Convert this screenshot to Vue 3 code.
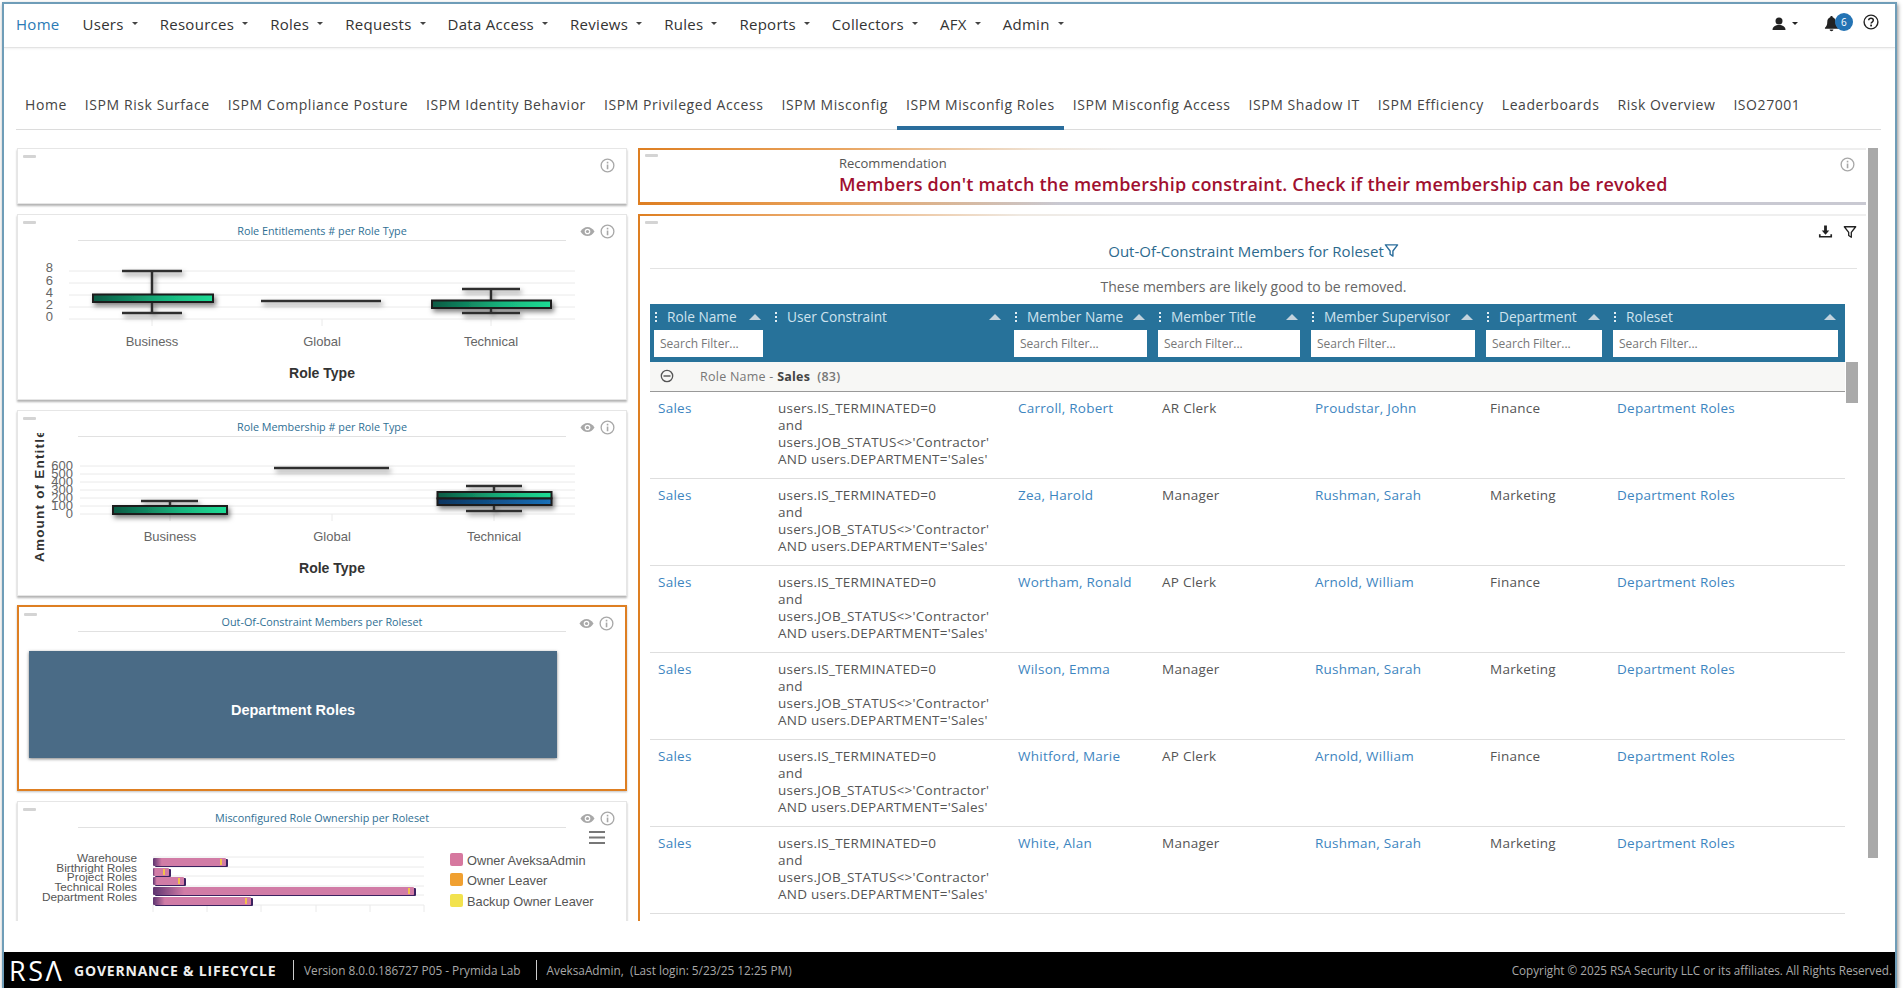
<script setup>
const navItems = ["Users", "Resources", "Roles", "Requests", "Data Access", "Reviews", "Rules", "Reports", "Collectors", "AFX", "Admin"];

const tabs = [
  "Home", "ISPM Risk Surface", "ISPM Compliance Posture", "ISPM Identity Behavior", "ISPM Privileged Access",
  "ISPM Misconfig", "ISPM Misconfig Roles", "ISPM Misconfig Access", "ISPM Shadow IT", "ISPM Efficiency",
  "Leaderboards", "Risk Overview", "ISO27001",
];

const columns = [
  { name: "Role Name", filter: true },
  { name: "User Constraint", filter: false },
  { name: "Member Name", filter: true },
  { name: "Member Title", filter: true },
  { name: "Member Supervisor", filter: true },
  { name: "Department", filter: true },
  { name: "Roleset", filter: true },
];

const members = [
  { name: "Carroll, Robert", title: "AR Clerk", supervisor: "Proudstar, John", dept: "Finance" },
  { name: "Zea, Harold", title: "Manager", supervisor: "Rushman, Sarah", dept: "Marketing" },
  { name: "Wortham, Ronald", title: "AP Clerk", supervisor: "Arnold, William", dept: "Finance" },
  { name: "Wilson, Emma", title: "Manager", supervisor: "Rushman, Sarah", dept: "Marketing" },
  { name: "Whitford, Marie", title: "AP Clerk", supervisor: "Arnold, William", dept: "Finance" },
  { name: "White, Alan", title: "Manager", supervisor: "Rushman, Sarah", dept: "Marketing" },
];

const ownership = [
  { label: "Warehouse", y: 858, end: 226 },
  { label: "Birthright Roles", y: 868, end: 169 },
  { label: "Project Roles", y: 877, end: 184 },
  { label: "Technical Roles", y: 887, end: 414 },
  { label: "Department Roles", y: 897, end: 251 },
];

const legend = [
  { label: "Owner AveksaAdmin", color: "#d6789f", y: 853 },
  { label: "Owner Leaver", color: "#f0a030", y: 873 },
  { label: "Backup Owner Leaver", color: "#f2e24e", y: 894 },
];
</script>

<template>
  <div class="shell">
    <svg class="sprite" width="0" height="0">
      <symbol id="i-info" viewBox="0 0 16 16">
        <circle cx="8" cy="8" r="6.8" fill="none" stroke="currentColor" stroke-width="1.4" />
        <rect x="7.2" y="7" width="1.7" height="5" fill="currentColor" />
        <rect x="7.2" y="4" width="1.7" height="1.8" fill="currentColor" />
      </symbol>
      <symbol id="i-eye" viewBox="0 0 16 16">
        <path d="M0.500 8c2-3.200 4.600-4.800 7.500-4.800s5.500 1.600 7.500 4.800c-2 3.200-4.600 4.800-7.500 4.800S2.500 11.200 0.500 8z" fill="currentColor" />
        <circle cx="8" cy="8" r="3" fill="#fff" />
        <circle cx="8" cy="8" r="1.700" fill="currentColor" />
      </symbol>
      <symbol id="i-filter" viewBox="0 0 16 16">
        <path d="M1.500 2h13L9.500 8.500V14L6.500 12V8.500z" fill="none" stroke="currentColor" stroke-width="1.500" stroke-linejoin="round" />
      </symbol>
    </svg>

    <nav class="topnav">
      <a class="topnav__home">Home</a>
      <a v-for="item in navItems" :key="item" class="topnav__item">
        {{ item }}<i class="caret"></i>
      </a>
      <div class="topnav__tools">
        <svg class="tool-user" viewBox="0 0 16 16" width="16" height="16">
          <circle cx="8" cy="5" r="3.500" fill="#222" />
          <path d="M1.500 14c0-3.500 3-5 6.500-5s6.500 1.500 6.500 5z" fill="#222" />
        </svg>
        <i class="caret caret--dark"></i>
        <span class="bell">
          <svg viewBox="0 0 16 18" width="15" height="17">
            <path d="M8 1c-.8 0-1.300.6-1.300 1.300C4.500 3 3.500 4.800 3.500 7c0 3.500-1 5-2.500 6.500v1h14v-1C13.500 12 12.500 10.500 12.500 7c0-2.200-1-4-3.200-4.700C9.300 1.600 8.800 1 8 1z" fill="#222" />
            <path d="M6 15.500c0 1 1 1.800 2 1.800s2-.8 2-1.800z" fill="#222" />
          </svg>
          <b class="bell__badge">6</b>
        </span>
        <svg class="tool-help" viewBox="0 0 16 16" width="16" height="16">
          <circle cx="8" cy="8" r="6.900" fill="none" stroke="#222" stroke-width="1.400" />
          <path d="M5.700 6.300C5.800 5 6.800 4.300 8 4.300s2.300.8 2.300 2c0 1.800-2.200 1.700-2.200 3.300" fill="none" stroke="#222" stroke-width="1.500" />
          <rect x="7.200" y="10.600" width="1.800" height="1.800" fill="#222" />
        </svg>
      </div>
    </nav>

    <div class="tabs">
      <a v-for="tab in tabs" :key="tab" class="tabs__tab" :class="{ 'tabs__tab--active': tab === 'ISPM Misconfig Roles' }">{{ tab }}</a>
    </div>

    <main class="content">
      <section class="left">
        <div class="panel panel--blank">
          <span class="handle"></span>
          <div class="panel__tools">
            <svg class="ic"><use href="#i-info" /></svg>
          </div>
        </div>

        <div class="panel panel--chart">
          <span class="handle"></span>
          <div class="panel__tools">
            <svg class="ic"><use href="#i-eye" /></svg>
            <svg class="ic"><use href="#i-info" /></svg>
          </div>
          <h3 class="panel__title">Role Entitlements # per Role Type</h3>
          <svg class="chart" viewBox="18 241 608 158">
            <defs>
              <linearGradient id="g-green" x1="0" x2="1" y1="0" y2="0">
                <stop offset="0" stop-color="#0a5a44" />
                <stop offset="0.6" stop-color="#18b57e" />
                <stop offset="1" stop-color="#1fdc95" />
              </linearGradient>
              <linearGradient id="g-blue" x1="0" x2="1" y1="0" y2="0">
                <stop offset="0" stop-color="#0a3560" />
                <stop offset="1" stop-color="#1a70b8" />
              </linearGradient>
              <linearGradient id="g-pink" x1="0" x2="1" y1="0" y2="0">
                <stop offset="0" stop-color="#5d3470" />
                <stop offset="0.12" stop-color="#d17ca6" />
                <stop offset="1" stop-color="#d17ca6" />
              </linearGradient>
              <filter id="f-shadow" x="-10%" y="-60%" width="120%" height="300%">
                <feDropShadow dx="2" dy="3" stdDeviation="2.500" flood-color="#000" flood-opacity="0.5" />
              </filter>
              <filter id="f-bar" x="-5%" y="-30%" width="115%" height="170%">
                <feDropShadow dx="2" dy="1" stdDeviation="0.600" flood-color="#3a2060" flood-opacity="1" />
              </filter>
              <clipPath id="c-side">
                <rect x="20" y="433" width="40" height="140" />
              </clipPath>
            </defs>
            <g class="grid">
              <line x1="69" x2="575" y1="271" y2="271" />
              <line x1="69" x2="575" y1="283" y2="283" />
              <line x1="69" x2="575" y1="295" y2="295" />
              <line x1="69" x2="575" y1="307" y2="307" />
              <line x1="69" x2="575" y1="319" y2="319" />
              <line x1="152" x2="152" y1="319" y2="326" />
              <line x1="322" x2="322" y1="319" y2="326" />
              <line x1="491" x2="491" y1="319" y2="326" />
            </g>
            <g class="axis-y">
              <text x="53" y="272">8</text>
              <text x="53" y="285">6</text>
              <text x="53" y="297">4</text>
              <text x="53" y="309">2</text>
              <text x="53" y="321">0</text>
            </g>
            <g class="box" filter="url(#f-shadow)">
              <path d="M122 271H182M152 271V313M122 313H182" />
              <rect x="93" y="294.500" width="120" height="7.500" fill="url(#g-green)" />
              <path d="M261 301H381" />
              <path d="M462 289H520M491 289V313M462 313H520" />
              <rect x="432" y="300.500" width="119" height="7.500" fill="url(#g-green)" />
            </g>
            <g class="axis-x">
              <text x="152" y="346">Business</text>
              <text x="322" y="346">Global</text>
              <text x="491" y="346">Technical</text>
            </g>
            <text class="axis-title" x="322" y="378">Role Type</text>
          </svg>
        </div>

        <div class="panel panel--chart">
          <span class="handle"></span>
          <div class="panel__tools">
            <svg class="ic"><use href="#i-eye" /></svg>
            <svg class="ic"><use href="#i-info" /></svg>
          </div>
          <h3 class="panel__title">Role Membership # per Role Type</h3>
          <svg class="chart chart--open" viewBox="18 437 608 157">
            <g class="grid">
              <line x1="80" x2="575" y1="466" y2="466" />
              <line x1="80" x2="575" y1="474" y2="474" />
              <line x1="80" x2="575" y1="482" y2="482" />
              <line x1="80" x2="575" y1="490" y2="490" />
              <line x1="80" x2="575" y1="498" y2="498" />
              <line x1="80" x2="575" y1="506" y2="506" />
              <line x1="80" x2="575" y1="514" y2="514" />
              <line x1="170" x2="170" y1="514" y2="521" />
              <line x1="332" x2="332" y1="514" y2="521" />
              <line x1="494" x2="494" y1="514" y2="521" />
            </g>
            <g class="axis-y">
              <text x="73" y="470">600</text>
              <text x="73" y="478">500</text>
              <text x="73" y="486">400</text>
              <text x="73" y="494">300</text>
              <text x="73" y="502">200</text>
              <text x="73" y="510">100</text>
              <text x="73" y="518">0</text>
            </g>
            <g clip-path="url(#c-side)">
              <text class="axis-title axis-title--side" transform="translate(44 562) rotate(-90)" x="0" y="0">Amount of Entitlements</text>
            </g>
            <g class="box" filter="url(#f-shadow)">
              <path d="M141 501H198M170 501V506" />
              <rect x="113" y="506" width="114" height="8" fill="url(#g-green)" />
              <path d="M274 468H389" />
              <path d="M466 486H522M494 486V492M494 505V511M466 511H522" />
              <rect x="437.500" y="492" width="114" height="6.500" fill="url(#g-green)" />
              <rect x="437.500" y="498.500" width="114" height="6.500" fill="url(#g-blue)" />
            </g>
            <g class="axis-x">
              <text x="170" y="541">Business</text>
              <text x="332" y="541">Global</text>
              <text x="494" y="541">Technical</text>
            </g>
            <text class="axis-title" x="332" y="573">Role Type</text>
          </svg>
        </div>

        <div class="panel panel--chart panel--selected">
          <span class="handle"></span>
          <div class="panel__tools">
            <svg class="ic"><use href="#i-eye" /></svg>
            <svg class="ic"><use href="#i-info" /></svg>
          </div>
          <h3 class="panel__title">Out-Of-Constraint Members per Roleset</h3>
          <div class="treemap">Department Roles</div>
        </div>

        <div class="panel panel--chart panel--last">
          <span class="handle"></span>
          <div class="panel__tools">
            <svg class="ic"><use href="#i-eye" /></svg>
            <svg class="ic"><use href="#i-info" /></svg>
          </div>
          <h3 class="panel__title">Misconfigured Role Ownership per Roleset</h3>
          <svg class="chart" viewBox="18 828 608 94">
            <g class="grid">
              <line x1="153" x2="424" y1="857" y2="857" />
              <line x1="153" x2="424" y1="867" y2="867" />
              <line x1="153" x2="424" y1="876" y2="876" />
              <line x1="153" x2="424" y1="886" y2="886" />
              <line x1="153" x2="424" y1="895" y2="895" />
              <line x1="153" x2="424" y1="905" y2="905" />
              <line v-for="x in [153, 207, 261, 316, 370, 424]" :key="x" :x1="x" :x2="x" y1="905" y2="912" />
            </g>
            <text v-for="row in ownership" :key="row.label" class="bar-label" x="137" :y="row.y + 4">{{ row.label }}</text>
            <g v-for="row in ownership" :key="row.label + '-bar'">
              <rect x="153" :y="row.y" :width="row.end - 153" height="8" rx="1" fill="url(#g-pink)" filter="url(#f-bar)" />
              <rect :x="row.end - 6" :y="row.y + 1" width="2" height="6" fill="#f3c14a" />
            </g>
            <g v-for="item in legend" :key="item.label">
              <rect x="450" :y="item.y" width="13" height="13" rx="2" :fill="item.color" />
              <text class="legend" x="467" :y="item.y + 12">{{ item.label }}</text>
            </g>
            <path class="burger" d="M589 832H605M589 837.500H605M589 843H605" />
          </svg>
        </div>
      </section>

      <section class="right">
        <div class="reco">
          <span class="handle"></span>
          <div class="panel__tools">
            <svg class="ic"><use href="#i-info" /></svg>
          </div>
          <div class="reco__label">Recommendation</div>
          <div class="reco__text">Members don't match the membership constraint. Check if their membership can be revoked</div>
        </div>

        <div class="detail">
          <span class="handle"></span>
          <div class="detail__tools">
            <svg viewBox="0 0 16 16" width="15" height="15">
              <path d="M6.500 1.500h3V7H12L8 11.500 4 7h2.500z" fill="#222" />
              <path d="M1 11v3.500h14V11h-1.800v1.700H2.800V11z" fill="#222" />
            </svg>
            <svg class="ic ic--dark"><use href="#i-filter" /></svg>
          </div>
          <h2 class="detail__title">Out-Of-Constraint Members for Roleset<svg class="ic ic--title"><use href="#i-filter" /></svg></h2>
          <p class="detail__sub">These members are likely good to be removed.</p>

          <table class="grid-table">
            <colgroup>
              <col style="width: 120px" />
              <col style="width: 240px" />
              <col style="width: 144px" />
              <col style="width: 153px" />
              <col style="width: 175px" />
              <col style="width: 127px" />
              <col style="width: 236px" />
            </colgroup>
            <thead>
              <tr class="head-row">
                <th v-for="col in columns" :key="col.name">
                  <span class="head-cell">
                    <span class="dots"><i></i><i></i><i></i></span>
                    <span class="head-cell__name">{{ col.name }}</span>
                    <i class="sort"></i>
                  </span>
                </th>
              </tr>
              <tr class="filter-row">
                <th v-for="col in columns" :key="col.name + '-f'">
                  <input v-if="col.filter" class="filter-input" placeholder="Search Filter..." />
                </th>
              </tr>
            </thead>
            <tbody>
              <tr class="group-row">
                <td colspan="7">
                  <span class="group-row__inner">
                    <svg viewBox="0 0 16 16" width="14" height="14">
                      <circle cx="8" cy="8" r="6.500" fill="none" stroke="#555" stroke-width="1.500" />
                      <rect x="4" y="7.200" width="8" height="1.600" fill="#555" />
                    </svg>
                    <span class="group-row__text">Role Name - <b>Sales</b>&nbsp; <span class="group-row__count">(83)</span></span>
                  </span>
                </td>
              </tr>
              <tr v-for="m in members" :key="m.name" class="data-row">
                <td><a>Sales</a></td>
                <td>users.IS_TERMINATED=0<br />and<br />users.JOB_STATUS&lt;&gt;'Contractor'<br />AND users.DEPARTMENT='Sales'</td>
                <td><a>{{ m.name }}</a></td>
                <td>{{ m.title }}</td>
                <td><a>{{ m.supervisor }}</a></td>
                <td>{{ m.dept }}</td>
                <td><a>Department Roles</a></td>
              </tr>
            </tbody>
          </table>
          <span class="table-scroll"></span>
        </div>
      </section>

      <span class="page-scroll"></span>
    </main>

    <footer class="footer">
      <span class="footer__logo">RS&#923;</span>
      <span class="footer__product">GOVERNANCE &amp; LIFECYCLE</span>
      <span class="footer__meta footer__meta--sep">Version 8.0.0.186727 P05 - Prymida Lab</span>
      <span class="footer__meta footer__meta--sep">AveksaAdmin,&nbsp; (Last login: 5/23/25 12:25 PM)</span>
      <span class="footer__copy">Copyright © 2025 RSA Security LLC or its affiliates. All Rights Reserved.</span>
    </footer>
  </div>
</template>

<style>
html,
body {
  margin: 0;
  background: #fff;
}
</style>

<style scoped>
.shell {
  position: relative;
  box-sizing: border-box;
  width: 1895px;
  height: 986px;
  margin: 2px 0 0 2px;
  border: 2px solid #6f9db8;
  border-bottom: 0;
  background: #fff;
  display: flex;
  flex-direction: column;
  font-family: "Open Sans", sans-serif;
  color: #555;
  box-shadow: 1px 2px 4px rgba(0, 0, 0, 0.45);
  overflow: hidden;
}

.sprite {
  position: absolute;
}

.topnav {
  flex: none;
  box-sizing: border-box;
  height: 44px;
  display: flex;
  align-items: center;
  padding: 0 0 4px 12px;
  border-bottom: 1px solid #e3e3e3;
  box-shadow: 0 1px 2px rgba(0, 0, 0, 0.06);
  font-size: 15px;
  letter-spacing: 0.28px;
  color: #333;
}

.topnav__home {
  color: #2b7ab5;
  margin-right: 23px;
}

.topnav__item {
  display: flex;
  align-items: center;
  margin-right: 22px;
  white-space: nowrap;
}

.caret {
  display: inline-block;
  width: 0;
  height: 0;
  margin-left: 8px;
  border-left: 3px solid transparent;
  border-right: 3px solid transparent;
  border-top: 3px solid #444;
}

.caret--dark {
  margin-left: 3px;
  border-top-color: #222;
}

.topnav__tools {
  margin-left: auto;
  display: flex;
  align-items: center;
  padding-right: 16px;
}

.tool-user {
  margin-right: 2px;
}

.bell {
  position: relative;
  display: inline-flex;
  margin-left: 26px;
  margin-right: 24px;
}

.bell__badge {
  position: absolute;
  left: 11px;
  top: -2px;
  width: 18px;
  height: 18px;
  line-height: 18px;
  border-radius: 50%;
  background: #2473b4;
  color: #fff;
  font-size: 10px;
  font-weight: 400;
  text-align: center;
}

.tool-help {
  margin-top: -3px;
}

.tabs {
  flex: none;
  height: 82px;
  margin: 0 14px 0 12px;
  box-sizing: border-box;
  display: flex;
  align-items: flex-end;
  border-bottom: 1px solid #dcdcdc;
}

.tabs__tab {
  box-sizing: border-box;
  height: 40px;
  padding: 5px 9px 0;
  font-size: 14px;
  line-height: 20px;
  letter-spacing: 0.57px;
  color: #444;
  white-space: nowrap;
  margin-bottom: -1px;
}

.tabs__tab--active {
  border-bottom: 4px solid #2a6d9c;
}

.content {
  flex: none;
  position: relative;
  height: 773px;
  margin-top: 18px;
  padding-left: 13px;
  display: flex;
  gap: 11px;
  overflow: hidden;
}

.left {
  flex: none;
  width: 610px;
  display: flex;
  flex-direction: column;
  gap: 10px;
}

.right {
  flex: none;
  width: 1228px;
  display: flex;
  flex-direction: column;
  gap: 9px;
}

.panel {
  position: relative;
  flex: none;
  box-sizing: border-box;
  border: 1px solid #e6e6e6;
  background: #fff;
  box-shadow: 0 2px 2px rgba(0, 0, 0, 0.3);
}

.panel--blank {
  height: 56px;
}

.panel--chart {
  height: 186px;
}

.panel--selected {
  margin-top: -1px;
  border: 2px solid #de7f22;
  box-shadow: 0 1px 2px rgba(0, 0, 0, 0.25);
}

.panel--last {
  height: 220px;
}

.handle {
  position: absolute;
  left: 5px;
  top: 6px;
  width: 13px;
  height: 3px;
  border-radius: 1px;
  background: #d4d4d4;
}

.panel__tools {
  position: absolute;
  top: 9px;
  right: 11px;
  display: flex;
  align-items: center;
  gap: 5px;
}

.ic {
  display: block;
  width: 15px;
  height: 15px;
  color: #a8a8a8;
}

.panel__title {
  box-sizing: border-box;
  height: 26px;
  margin: 0 60px 0 60px;
  padding-top: 8px;
  border-bottom: 1px solid #e1e1e1;
  font-size: 10.800px;
  line-height: 16px;
  font-weight: 400;
  text-align: center;
  color: #2f6f94;
}

.chart {
  display: block;
  width: 608px;
}

.chart--open {
  overflow: visible;
}

.panel--selected .panel__title {
  margin-left: 59px;
  margin-right: 59px;
  padding-top: 7px;
  height: 25px;
}

.grid line {
  stroke: #eaeaea;
  stroke-width: 1;
}

.axis-y text {
  font-family: "Liberation Sans", sans-serif;
  font-size: 13px;
  fill: #666;
  text-anchor: end;
}

.axis-x text {
  font-family: "Liberation Sans", sans-serif;
  font-size: 13px;
  fill: #666;
  text-anchor: middle;
}

.axis-title {
  font-family: "Liberation Sans", sans-serif;
  font-size: 14px;
  font-weight: 700;
  fill: #333;
  text-anchor: middle;
}

.axis-title--side {
  font-size: 13.500px;
  letter-spacing: 1.200px;
  text-anchor: start;
}

.box path {
  fill: none;
  stroke: #2d2d2d;
  stroke-width: 2.500;
}

.box rect {
  stroke: #1a1a1a;
  stroke-width: 2;
}

.treemap {
  display: flex;
  align-items: center;
  justify-content: center;
  box-sizing: border-box;
  width: 528px;
  height: 107px;
  margin: 19px 0 0 10px;
  padding-top: 10px;
  background: #4a6b86;
  color: #fff;
  font-family: "Liberation Sans", sans-serif;
  font-size: 14.500px;
  font-weight: 700;
  box-shadow: 0 1px 3px rgba(0, 0, 0, 0.5);
}

.bar-label {
  font-family: "Liberation Sans", sans-serif;
  font-size: 11.800px;
  fill: #555;
  text-anchor: end;
}

.legend {
  font-family: "Liberation Sans", sans-serif;
  font-size: 12.800px;
  fill: #555;
}

.burger {
  fill: none;
  stroke: #777;
  stroke-width: 2;
}

.reco {
  position: relative;
  flex: none;
  box-sizing: border-box;
  height: 57px;
  padding-left: 199px;
  overflow: hidden;
  border-left: 2px solid #de7f22;
  background:
    linear-gradient(90deg, #de7f22 0, #e9a45f 200px, #efe3d6 400px, #eee 480px) top / 100% 2px no-repeat,
    linear-gradient(90deg, #de7f22 0, #e9a45f 200px, #c9c9d2 420px, #c9c9d2 100%) bottom / 100% 3px no-repeat,
    #fff;
}

.reco .handle {
  left: 5px;
}

.reco__label {
  padding-top: 6px;
  font-size: 13px;
  line-height: 18px;
  color: #555;
}

.reco__text {
  height: 21px;
  overflow: hidden;
  margin-top: 0;
  font-size: 18px;
  line-height: 24px;
  font-weight: 600;
  letter-spacing: 0.2px;
  color: #a01030;
  white-space: nowrap;
}

.detail {
  position: relative;
  flex: none;
  box-sizing: border-box;
  height: 720px;
  padding: 0 0 0 10px;
  border-left: 2px solid #de7f22;
  background: linear-gradient(90deg, #de7f22 0, #edb27a 200px, #efe9e2 380px, #efefef 480px) top / 100% 2px no-repeat, #fff;
}

.detail .handle {
  left: 5px;
  top: 7px;
}

.detail__tools {
  position: absolute;
  top: 10px;
  right: 9px;
  display: flex;
  align-items: center;
  gap: 10px;
}

.ic--dark {
  color: #222;
  width: 14px;
  height: 14px;
}

.ic--title {
  display: inline-block;
  vertical-align: -1px;
  width: 15px;
  height: 15px;
  color: #2a6d9c;
}

.detail__title {
  box-sizing: border-box;
  width: 1207px;
  height: 55px;
  margin: 0;
  padding-top: 26px;
  border-bottom: 1px solid #e3e3e3;
  text-align: center;
  font-size: 15px;
  line-height: 22px;
  font-weight: 400;
  color: #2c6a8e;
}

.detail__sub {
  width: 1207px;
  height: 35px;
  margin: 0;
  padding-top: 8px;
  box-sizing: border-box;
  text-align: center;
  font-size: 14px;
  line-height: 20px;
  color: #666;
}

.grid-table {
  width: 1195px;
  table-layout: fixed;
  border-collapse: collapse;
  font-size: 13.500px;
  line-height: 17.200px;
  letter-spacing: 0.25px;
}

.head-row th {
  height: 26px;
  padding: 0;
  background: #27729a;
  font-weight: 400;
  text-align: left;
  color: #cfe3ee;
}

.head-cell {
  display: flex;
  align-items: center;
  padding: 0 9px 0 5px;
  font-size: 13.700px;
  letter-spacing: 0;
}

.dots {
  display: flex;
  flex-direction: column;
  gap: 2px;
  width: 12px;
}

.dots i {
  width: 2px;
  height: 2px;
  background: #e3eef4;
}

.head-cell__name {
  flex: 1;
  white-space: nowrap;
}

.sort {
  width: 0;
  height: 0;
  border-left: 6px solid transparent;
  border-right: 6px solid transparent;
  border-bottom: 6px solid #c3d3dd;
}

.filter-row th {
  box-sizing: border-box;
  height: 32px;
  padding: 0 7px 5px 4px;
  background: #27729a;
  vertical-align: top;
}

.filter-input {
  display: block;
  box-sizing: border-box;
  width: 100%;
  height: 27px;
  padding: 0 6px;
  border: 0;
  background: #fff;
  font-family: "Open Sans", sans-serif;
  font-size: 12px;
}

.filter-input::placeholder {
  color: #777;
  opacity: 1;
}

.group-row td {
  box-sizing: border-box;
  height: 29px;
  padding: 0;
  background: #f7f7f5;
  border-bottom: 1px solid #999;
}

.group-row__inner {
  display: flex;
  align-items: center;
  padding-left: 10px;
  font-size: 12.500px;
  color: #777;
}

.group-row__text {
  margin-left: 26px;
}

.group-row__text b {
  color: #444;
  font-weight: 700;
}

.group-row__count {
  font-weight: 600;
}

.data-row td {
  height: 87px;
  box-sizing: border-box;
  padding: 8px 8px 0;
  vertical-align: top;
  border-bottom: 1px solid #dedede;
  white-space: nowrap;
}

.data-row a {
  color: #3d85c0;
}

.table-scroll {
  position: absolute;
  left: 1206px;
  top: 148px;
  width: 12px;
  height: 41px;
  background: #aaa;
}

.page-scroll {
  position: absolute;
  right: 17px;
  top: 0;
  width: 10px;
  height: 710px;
  background: #a9a9a9;
}

.footer {
  flex: none;
  box-sizing: border-box;
  height: 36px;
  margin-top: auto;
  padding: 0 3px 0 5px;
  display: flex;
  align-items: center;
  background: #000;
  color: #a8a8a8;
  font-size: 11.800px;
  white-space: nowrap;
}

.footer__logo {
  width: 65px;
  font-size: 27px;
  font-weight: 400;
  letter-spacing: 2.500px;
  color: #fff;
}

.footer__product {
  width: 219px;
  font-size: 14px;
  font-weight: 700;
  letter-spacing: 0.800px;
  color: #eee;
}

.footer__meta--sep {
  padding-left: 10px;
  margin-right: 15px;
  line-height: 20px;
  border-left: 1px solid #ccc;
}

.footer__copy {
  margin-left: auto;
  font-size: 11.700px;
}
</style>
